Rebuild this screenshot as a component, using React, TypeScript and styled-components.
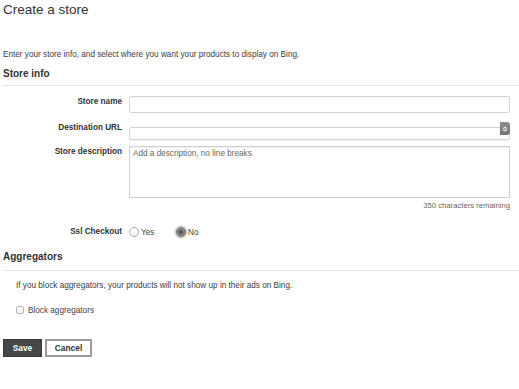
import React from "react";
import styled, { createGlobalStyle } from "styled-components";

const GlobalStyle = createGlobalStyle`
  html, body {
    margin: 0;
    padding: 0;
    background: #ffffff;
  }
  body {
    font-family: "Liberation Sans", Arial, Helvetica, sans-serif;
    color: #444;
  }
`;

const Page = styled.div`
  width: 519px;
  height: 389px;
  padding-left: 3px;
  box-sizing: border-box;
  overflow: hidden;
`;

const Title = styled.h1`
  margin: 0;
  height: 20px;
  line-height: 20px;
  font-size: 13.5px;
  font-weight: normal;
  color: #333;
`;

const Text = styled.p<{ $top: number; $indent?: number }>`
  margin: ${(p) => p.$top}px 0 0 ${(p) => p.$indent ?? 0}px;
  font-size: 8.2px;
  line-height: 10px;
  color: #3d3d3d;
`;

const Heading = styled.h2<{ $top: number }>`
  margin: ${(p) => p.$top}px 0 0;
  font-size: 10px;
  line-height: 12px;
  font-weight: bold;
  color: #333;
`;

const Rule = styled.hr<{ $top: number }>`
  margin: ${(p) => p.$top}px 0 0;
  border: 0;
  border-top: 1px solid #e6e6e6;
  height: 0;
`;

const Row = styled.div<{ $top: number; $center?: boolean }>`
  display: grid;
  grid-template-columns: 119px 381px;
  column-gap: 7px;
  align-items: ${(p) => (p.$center ? "center" : "start")};
  margin-top: ${(p) => p.$top}px;
`;

const Label = styled.label<{ $pad?: number }>`
  text-align: right;
  font-size: 8.2px;
  line-height: 10px;
  font-weight: bold;
  color: #333;
  padding-top: ${(p) => p.$pad ?? 2}px;
`;

const TextInput = styled.input`
  box-sizing: border-box;
  width: 100%;
  height: 17px;
  border: 1px solid #d4d4d4;
  border-radius: 2px;
  box-shadow: inset 0 1px 1px rgba(0, 0, 0, 0.04);
  padding: 0 4px;
  font: inherit;
  font-size: 8px;
  outline: none;
`;

const SelectWrap = styled.div`
  position: relative;
  height: 13px;
`;

const SelectBox = styled.select`
  appearance: none;
  -webkit-appearance: none;
  box-sizing: border-box;
  width: 100%;
  height: 13px;
  border: 1px solid #d2d2d2;
  border-radius: 3px;
  background: #fff;
  box-shadow: 0 1px 1px rgba(0, 0, 0, 0.06);
  font: inherit;
  font-size: 8px;
  padding: 0 4px;
  outline: none;
`;

const SelectButton = styled.span`
  position: absolute;
  right: 0;
  top: 0;
  width: 10px;
  height: 13px;
  border-radius: 0 3px 3px 0;
  background: linear-gradient(#8d8d8d, #6f6f6f);
  display: flex;
  align-items: center;
  justify-content: center;
  pointer-events: none;
`;

const TextArea = styled.textarea`
  box-sizing: border-box;
  width: 100%;
  height: 52px;
  border: 1px solid #cfcfcf;
  border-radius: 0;
  box-shadow: inset 0 1px 1px rgba(0, 0, 0, 0.06);
  padding: 2px 3px;
  font: inherit;
  font-size: 8.2px;
  line-height: 10px;
  color: #555;
  resize: none;
  outline: none;
  &::placeholder {
    color: #666;
  }
`;

const Counter = styled.div`
  margin-top: 3px;
  width: 507px;
  text-align: right;
  font-size: 7.7px;
  line-height: 9px;
  color: #666;
`;

const RadioGroup = styled.div`
  display: flex;
  align-items: center;
  height: 12px;
`;

const RadioOption = styled.label<{ $width: number }>`
  display: flex;
  align-items: center;
  width: ${(p) => p.$width}px;
  font-size: 8.2px;
  color: #444;
  gap: 2px;
`;

const RadioDot = styled.span<{ $checked?: boolean }>`
  box-sizing: border-box;
  width: 10px;
  height: 10px;
  border-radius: 50%;
  border: 1px solid ${(p) => (p.$checked ? "#6a6a6a" : "#aaa")};
  background: ${(p) =>
    p.$checked
      ? "radial-gradient(circle, #555 0 2px, #8a8a8a 2.5px)"
      : "linear-gradient(#fff, #f2f2f2)"};
  box-shadow: ${(p) =>
    p.$checked ? "0 0 2px 1px rgba(90,90,90,0.45)" : "none"};
`;

const CheckRow = styled.label`
  display: flex;
  align-items: center;
  gap: 4px;
  margin: 14px 0 0 13px;
  height: 10px;
  font-size: 8.2px;
  color: #444;
`;

const CheckBox = styled.span`
  box-sizing: border-box;
  width: 8px;
  height: 8px;
  border: 1px solid #b5b5b5;
  border-radius: 2px;
  background: linear-gradient(#fff, #f0f0f0);
`;

const Actions = styled.div`
  display: flex;
  gap: 3px;
  margin-top: 24px;
`;

const Button = styled.button<{ $primary?: boolean }>`
  box-sizing: border-box;
  height: 18px;
  width: ${(p) => (p.$primary ? 39 : 47)}px;
  padding: 0;
  font-family: inherit;
  font-size: 8.4px;
  font-weight: bold;
  color: ${(p) => (p.$primary ? "#fff" : "#333")};
  background: ${(p) => (p.$primary ? "#464646" : "#fff")};
  border: ${(p) => (p.$primary ? "1px solid #3a3a3a" : "2px solid #9a9a9a")};
  border-radius: 0;
`;

const Arrows = () => (
  <svg width="6" height="8" viewBox="0 0 6 8">
    <circle cx="3" cy="4" r="2.8" fill="#a8a8a8" />
    <path d="M1.6 3.4 L3 2 L4.4 3.4 M1.6 4.6 L3 6 L4.4 4.6" stroke="#eee" strokeWidth="0.8" fill="none" />
  </svg>
);

export default function App() {
  return (
    <Page>
      <GlobalStyle />
      <Title>Create a store</Title>
      <Text $top={30}>
        Enter your store info, and select where you want your products to display on Bing.
      </Text>
      <Heading $top={8}>Store info</Heading>
      <Rule $top={5} />

      <Row $top={10}>
        <Label $pad={1}>Store name</Label>
        <TextInput type="text" />
      </Row>
      <Row $top={9}>
        <Label $pad={1}>Destination URL</Label>
        <SelectWrap>
          <SelectBox defaultValue="">
            <option value=""></option>
          </SelectBox>
          <SelectButton>
            <Arrows />
          </SelectButton>
        </SelectWrap>
      </Row>
      <Row $top={11}>
        <Label $pad={1}>Store description</Label>
        <TextArea placeholder="Add a description, no line breaks" />
      </Row>
      <Counter>350 characters remaining</Counter>

      <Row $top={16} $center>
        <Label $pad={0}>Ssl Checkout</Label>
        <RadioGroup>
          <RadioOption $width={47}>
            <RadioDot />
            Yes
          </RadioOption>
          <RadioOption $width={40}>
            <RadioDot $checked />
            No
          </RadioOption>
        </RadioGroup>
      </Row>

      <Heading $top={13}>Aggregators</Heading>
      <Rule $top={7} />
      <Text $top={10} $indent={13}>
        If you block aggregators, your products will not show up in their ads on Bing.
      </Text>
      <CheckRow>
        <CheckBox />
        Block aggregators
      </CheckRow>

      <Actions>
        <Button $primary>Save</Button>
        <Button>Cancel</Button>
      </Actions>
    </Page>
  );
}
